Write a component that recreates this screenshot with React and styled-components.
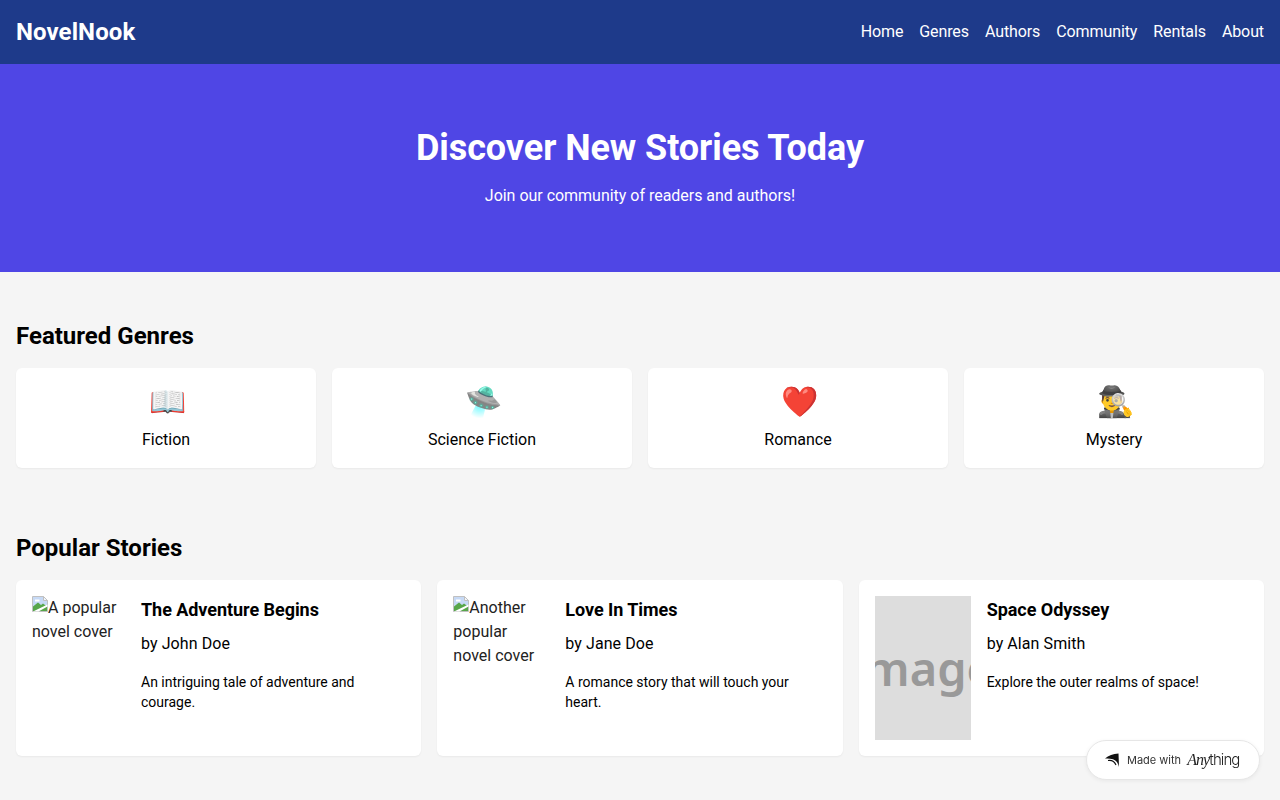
import React from "react";
import styled, { createGlobalStyle } from "styled-components";

const Global = createGlobalStyle`
  * { box-sizing: border-box; }
  html, body { margin: 0; padding: 0; }
  body { background: #f5f5f5; color: #000; font-family: Roboto, sans-serif; font-size: 16px; line-height: 24px; }
  h1, h2, h3, p { margin: 0; }
`;

const Header = styled.header`
  height: 64px; padding: 16px; background: #1e3a8a; color: #fff;
  display: flex; align-items: center; justify-content: space-between;
`;
const Logo = styled.div`font-size: 24px; line-height: 32px; font-weight: 700; letter-spacing: .1px;`;
const Nav = styled.nav`display: flex; gap: 16px; letter-spacing: -.1px;`;
const NavLink = styled.a`color: #fff; text-decoration: none;`;

const Hero = styled.section`
  padding: 64px 16px; background: #4f46e5; color: #fff; text-align: center;
`;
const HeroTitle = styled.h1`font-size: 36px; line-height: 40px; font-weight: 700; margin-bottom: 16px; letter-spacing: -.07px;`;
const HeroText = styled.p`letter-spacing: -.02px;`;

const Section = styled.section`padding: 48px 16px 16px;`;
const SectionTitle = styled.h2`font-size: 24px; line-height: 32px; font-weight: 700; margin-bottom: 16px;`;

const GenreGrid = styled.div`display: grid; grid-template-columns: repeat(4, 1fr); gap: 16px;`;
const GenreCard = styled.div`
  background: #fff; border-radius: 6px; padding: 16px; text-align: center;
  box-shadow: 0 1px 2px rgba(0,0,0,.05);
`;
const Emoji = styled.div`font-size: 30px; line-height: 36px; margin-bottom: 8px; padding-left: 2px;`;

const StoryGrid = styled.div`display: grid; grid-template-columns: repeat(3, 1fr); gap: 16px;`;
const StoryCard = styled.article`
  background: #fff; border-radius: 6px; padding: 16px; display: flex; gap: 16px;
  box-shadow: 0 1px 2px rgba(0,0,0,.05);
`;
const Cover = styled.div`
  flex: 0 0 ${p => p.$width}px; height: 144px; color: #222; padding-right: 2px;
`;
const BrokenIcon = styled.svg`width: 16px; height: 16px; vertical-align: top;`;
const PlaceholderCover = styled.div`
  flex: 0 0 96px; height: 144px; background: #ddd; color: #999; overflow: hidden;
  display: flex; align-items: center; justify-content: center;
  font-family: "Noto Sans", sans-serif; font-size: 47px; font-weight: 600; line-height: 144px;
`;
const StoryBody = styled.div`min-width: 0; flex: 1;`;
const StoryTitle = styled.h3`font-size: 18px; line-height: 28px; font-weight: 700; margin-bottom: 8px; letter-spacing: -.05px;`;
const Author = styled.p`margin-bottom: 16px; letter-spacing: .08px;`;
const Desc = styled.p`font-size: 14px; line-height: 20px;`;

const Badge = styled.a`
  position: fixed; right: 20px; bottom: 20px; width: 174px; height: 40px; padding-left: 17px;
  display: flex; align-items: center; gap: 7px;
  background: #fff; border-radius: 20px; border: 1px solid #e6e6e6;
  box-shadow: 0 1px 4px rgba(0,0,0,.06);
  font-family: Inter, sans-serif; font-size: 11px; color: #333;
`;
const BadgeIcon = styled.svg`width: 16px; height: 16px; flex: none;`;
const Brand = styled.span`display: inline-flex; align-items: baseline; color: #222; font-size: 15px; letter-spacing: -.9px; margin-left: -1px;`;
const BrandAny = styled.span`font-family: "Liberation Serif", serif; font-style: italic; font-size: 16px; font-weight: 400;`;
const BrandThing = styled.span`font-weight: 300;`;

const Broken = () => (
  <BrokenIcon viewBox="0 0 16 16" aria-hidden="true">
    <path d="M.5.5h11l4 4v11H.5z" fill="#c6d9f5" stroke="#c0c0c0" />
    <path d="M3 3.500h4.500v2H3z" fill="#fff" />
    <path d="M1 15V10.500L6 6.500l3 2.500 2-1.500 4 3V15z" fill="#57a64a" />
    <path d="M11.500.5v4h4z" fill="#f2f5fa" stroke="#c0c0c0" />
    <path d="M1 15.500L15.500 8.500v2L6.500 15.500z" fill="#fff" />
  </BrokenIcon>
);

const genres = [
  ["📖", "Fiction"],
  ["🛸", "Science Fiction"],
  ["❤️", "Romance"],
  ["🕵️‍♂️", "Mystery"],
];

export default function App() {
  return (
    <>
      <Global />
      <Header>
        <Logo>NovelNook</Logo>
        <Nav>
          {["Home", "Genres", "Authors", "Community", "Rentals", "About"].map(n => (
            <NavLink key={n} href="#">{n}</NavLink>
          ))}
        </Nav>
      </Header>
      <Hero>
        <HeroTitle>Discover New Stories Today</HeroTitle>
        <HeroText>Join our community of readers and authors!</HeroText>
      </Hero>
      <Section>
        <SectionTitle>Featured Genres</SectionTitle>
        <GenreGrid>
          {genres.map(([e, n]) => (
            <GenreCard key={n}>
              <Emoji>{e}</Emoji>
              <div>{n}</div>
            </GenreCard>
          ))}
        </GenreGrid>
      </Section>
      <Section>
        <SectionTitle>Popular Stories</SectionTitle>
        <StoryGrid>
          <StoryCard>
            <Cover $width={93}><Broken />A popular novel cover</Cover>
            <StoryBody>
              <StoryTitle>The Adventure Begins</StoryTitle>
              <Author>by John Doe</Author>
              <Desc>An intriguing tale of adventure and courage.</Desc>
            </StoryBody>
          </StoryCard>
          <StoryCard>
            <Cover $width={96}><Broken />Another popular novel cover</Cover>
            <StoryBody>
              <StoryTitle>Love In Times</StoryTitle>
              <Author>by Jane Doe</Author>
              <Desc>A romance story that will touch your heart.</Desc>
            </StoryBody>
          </StoryCard>
          <StoryCard>
            <PlaceholderCover>image</PlaceholderCover>
            <StoryBody>
              <StoryTitle>Space Odyssey</StoryTitle>
              <Author>by Alan Smith</Author>
              <Desc>Explore the outer realms of space!</Desc>
            </StoryBody>
          </StoryCard>
        </StoryGrid>
      </Section>
      <Badge>
        <BadgeIcon viewBox="0 0 16 16" aria-hidden="true">
          <path d="M1 6.500C4.500 3.500 9 2 14.500 1.500L15 15C14 11 12.500 8.500 9 7.300 6.500 6.500 4 6.300 1 6.500z" fill="#111" />
          <path d="M4 8.500C7 8 10.500 9.500 12 13" fill="none" stroke="#111" strokeWidth="1.100" />
        </BadgeIcon>
        <span>Made with</span>
        <Brand><BrandAny>Any</BrandAny><BrandThing>thing</BrandThing></Brand>
      </Badge>
    </>
  );
}
